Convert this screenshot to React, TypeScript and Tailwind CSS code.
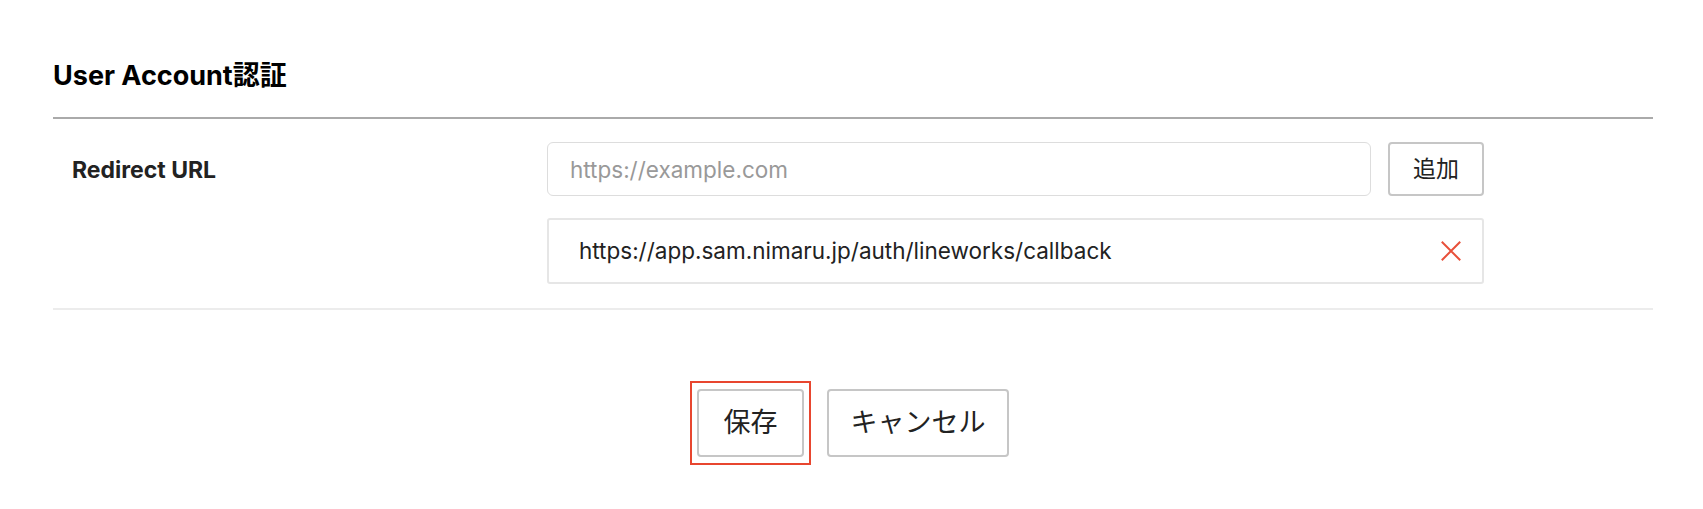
const font = "font-['Inter','Noto_Sans_CJK_JP',sans-serif]";

const redirectUrls = ["https://app.sam.nimaru.jp/auth/lineworks/callback"];

function CloseIcon() {
  return (
    <svg width="20" height="20" viewBox="0 0 20 20" fill="none" stroke="#e8503a" strokeWidth="2" strokeLinecap="square">
      <path d="M1.5 1.5 18.5 18.5M18.5 1.5 1.5 18.5" />
    </svg>
  );
}

export default function App() {
  return (
    <div className={`${font} min-h-[509px] bg-white pl-[53px] pr-[50px] pt-[60px] text-[#222]`}>
      <h1 className="text-[27px] font-bold leading-[32px] text-black">User Account認証</h1>
      <div className="mt-[25px] h-[2px] bg-[#aaaaaa]" />

      {/* Redirect URL row */}
      <div className="flex pt-[23px] pb-[24px]">
        <div className="w-[494px] shrink-0 pl-[19px] pt-[14px] text-[23px] font-bold leading-[28px] text-[#222]">
          Redirect URL
        </div>
        <div className="flex w-[937px] flex-col gap-[22px]">
          <div className="flex gap-[17px]">
            <input
              type="text"
              placeholder="https://example.com"
              className="h-[54px] flex-1 rounded-[6px] border-[1.5px] border-[#dddddd] px-[22px] text-[22.5px] text-[#222] outline-none placeholder:text-[#999]"
            />
            <button
              type="button"
              className="h-[54px] w-[96px] rounded-[4px] border-2 border-[#c6c6c6] bg-white text-[23px] text-[#222]"
            >
              追加
            </button>
          </div>
          {redirectUrls.map((url) => (
            <div
              key={url}
              className="flex h-[66px] items-center justify-between rounded-[3px] border-2 border-[#e6e6e6] pl-[30px] pr-[21px]"
            >
              <span className="text-[22.5px] text-[#222]">{url}</span>
              <CloseIcon />
            </div>
          ))}
        </div>
      </div>
      <div className="h-[2px] bg-[#ececec]" />

      {/* Actions */}
      <div className="mt-[79px] flex justify-center gap-[23px]">
        <div className="relative">
          <button
            type="button"
            className="h-[68px] w-[107px] rounded-[4px] border-2 border-[#c6c6c6] bg-white text-[27px] text-[#222]"
          >
            保存
          </button>
          <span className="pointer-events-none absolute -inset-x-[7px] -inset-y-[8px] border-2 border-[#e8462f]" />
        </div>
        <button
          type="button"
          className="h-[68px] w-[182px] rounded-[4px] border-2 border-[#c6c6c6] bg-white text-[27px] text-[#222]"
        >
          キャンセル
        </button>
      </div>
    </div>
  );
}
